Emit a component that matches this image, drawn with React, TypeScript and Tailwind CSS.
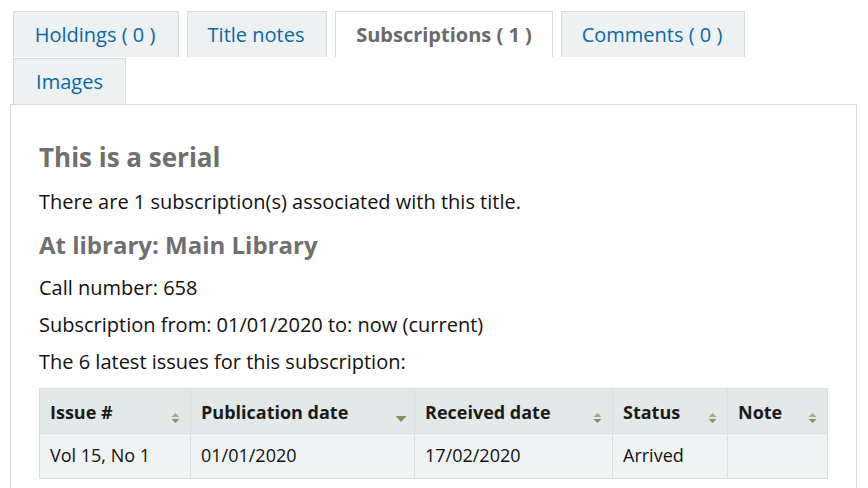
import React from "react";

const SortBoth = () => (
  <svg width="9" height="12" viewBox="0 0 9 12" className="absolute right-[10px] bottom-[9px]">
    <polygon points="4.5,1 8.5,5 0.5,5" fill="#a6ad86" />
    <polygon points="0.5,7 8.5,7 4.5,11" fill="#8c8f5c" />
  </svg>
);

const SortDesc = () => (
  <svg width="12" height="8" viewBox="0 0 12 8" className="absolute right-[7px] bottom-[10px]">
    <polygon points="0.5,1 11.5,1 6,7" fill="#8c8f5c" />
  </svg>
);

export default function App() {
  const tabBase =
    "h-[46px] flex items-center justify-center border border-b-0 border-[#d6dbdc] text-[20px]";
  const inactive = tabBase + " bg-[#eef1f2] text-[#0a68a3]";
  const th = "relative border border-[#d9dede] text-left font-bold pl-[10px] pt-[2px] text-[#1a1a1a]";
  return (
    <div className="w-[868px] h-[488px] overflow-hidden bg-white" style={{ fontFamily: '"Open Sans", sans-serif' }}>
      <div className="pl-[13px] pt-[11px] flex flex-wrap gap-x-[8px] gap-y-[1px] w-[800px]">
        <div className={inactive + " w-[166px] pr-[2px]"}>Holdings ( 0 )</div>
        <div className={inactive + " w-[140px] pr-[2px]"}>Title notes</div>
        <div className={tabBase + " w-[218px] bg-white text-[#6b6b6b] font-bold"}>Subscriptions ( 1 )</div>
        <div className={inactive + " w-[184px] pr-[2px]"}>Comments ( 0 )</div>
        <div className={inactive + " w-[113px]"}>Images</div>
      </div>
      <div className="ml-[10px] w-[847px] h-[400px] border border-[#d6dbdc] pl-[28px] pt-[35px] text-[#111] text-[20px]">
        <h3 className="text-[26px] font-bold text-[#6f6f6f] leading-[34px]">This is a serial</h3>
        <p className="leading-[26px] mt-[15px]">There are 1 subscription(s) associated with this title.</p>
        <h4 className="text-[24px] font-bold text-[#6f6f6f] leading-[30px] mt-[15px]">At library: Main Library</h4>
        <p className="leading-[26px] mt-[15px]">Call number: 658</p>
        <p className="leading-[26px] mt-[11px]">Subscription from: 01/01/2020 to: now (current)</p>
        <p className="leading-[26px] mt-[11px]">The 6 latest issues for this subscription:</p>
        <table className="mt-[13px] border-collapse border border-[#d9dede] text-[18px]">
          <thead>
            <tr className="bg-[#e3e8e8] h-[45px]">
              <th className={th + " w-[151px]"}>Issue #<SortBoth /></th>
              <th className={th + " w-[224px]"}>Publication date<SortDesc /></th>
              <th className={th + " w-[198px]"}>Received date<SortBoth /></th>
              <th className={th + " w-[115px]"}>Status<SortBoth /></th>
              <th className={th + " w-[100px]"}>Note<SortBoth /></th>
            </tr>
          </thead>
          <tbody>
            <tr className="bg-[#f0f3f3] h-[45px]">
              <td className="border border-[#d9dede] pl-[10px] pb-[1px]">Vol 15, No 1</td>
              <td className="border border-[#d9dede] pl-[10px] pb-[1px]">01/01/2020</td>
              <td className="border border-[#d9dede] pl-[10px] pb-[1px]">17/02/2020</td>
              <td className="border border-[#d9dede] pl-[10px] pb-[1px]">Arrived</td>
              <td className="border border-[#d9dede] pl-[10px] pb-[1px]"></td>
            </tr>
          </tbody>
        </table>
      </div>
    </div>
  );
}
